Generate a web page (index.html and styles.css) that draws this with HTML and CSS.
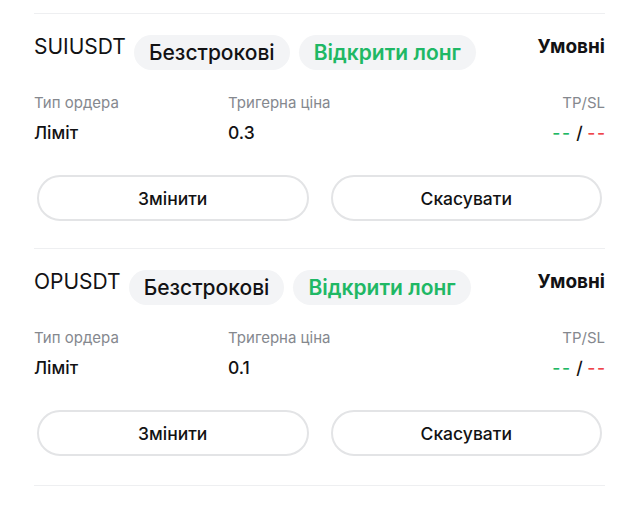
FILE: index.html
```html
<!DOCTYPE html>
<html lang="uk">
<head>
<meta charset="utf-8">
<link rel="stylesheet" href="styles.css">
</head>
<body>
<div class="list">
  <div class="card">
    <div class="head">
      <span class="sym">SUIUSDT</span>
      <span class="pill">Безстрокові</span>
      <span class="pill green">Відкрити лонг</span>
      <span class="type">Умовні</span>
    </div>
    <div class="info">
      <div class="cell"><div class="lbl">Тип ордера</div><div class="val">Ліміт</div></div>
      <div class="cell"><div class="lbl">Тригерна ціна</div><div class="val">0.3</div></div>
      <div class="cell right"><div class="lbl">TP/SL</div><div class="val"><span class="g">--</span> / <span class="r">--</span></div></div>
    </div>
    <div class="actions">
      <button class="btn">Змінити</button>
      <button class="btn">Скасувати</button>
    </div>
  </div>
  <div class="card">
    <div class="head">
      <span class="sym">OPUSDT</span>
      <span class="pill">Безстрокові</span>
      <span class="pill green">Відкрити лонг</span>
      <span class="type">Умовні</span>
    </div>
    <div class="info">
      <div class="cell"><div class="lbl">Тип ордера</div><div class="val">Ліміт</div></div>
      <div class="cell"><div class="lbl">Тригерна ціна</div><div class="val">0.1</div></div>
      <div class="cell right"><div class="lbl">TP/SL</div><div class="val"><span class="g">--</span> / <span class="r">--</span></div></div>
    </div>
    <div class="actions">
      <button class="btn">Змінити</button>
      <button class="btn">Скасувати</button>
    </div>
  </div>
</div>
</body>
</html>
```
FILE: styles.css
```css
html, body {
  margin: 0;
  padding: 0;
  background: #fff;
}
body {
  font-family: Inter, "Noto Sans", sans-serif;
  color: #121214;
}
.list {
  margin-left: 34px;
  width: 571px;
  padding-top: 13px;
}
.card {
  border-top: 1px solid #eeeff1;
  padding: 21px 0 27px;
}
.card:last-child {
  border-bottom: 1px solid #eeeff1;
  padding-bottom: 29px;
}
.head {
  display: flex;
  align-items: flex-start;
  height: 35px;
}
.sym {
  font-size: 21px;
  line-height: 22px;
  margin-top: 1px;
}
.pill {
  margin-left: 8px;
  height: 35px;
  line-height: 35px;
  padding: 0 15px;
  border-radius: 18px;
  background: #f3f4f6;
  font-size: 21px;
  font-weight: 500;
}
.pill.green {
  margin-left: 9px;
  color: #1fb865;
  font-weight: 600;
}
.type {
  margin-left: auto;
  font-size: 19px;
  font-weight: 700;
  line-height: 22px;
  margin-top: 1px;
}
.info {
  display: grid;
  grid-template-columns: 194px 1fr auto;
  margin-top: 25px;
}
.lbl {
  font-size: 15px;
  line-height: 16px;
  color: #85888e;
}
.val {
  font-size: 17.5px;
  line-height: 20px;
  margin-top: 12px;
  font-weight: 500;
  white-space: nowrap;
}
.right {
  text-align: right;
}
.g, .r {
  letter-spacing: 1.5px;
}
.g { color: #1fb865; }
.r { color: #ef454a; margin-right: -1.5px; }
.actions {
  display: flex;
  gap: 22px;
  padding: 0 3px;
  margin-top: 32px;
}
.btn {
  flex: 1;
  height: 46px;
  border: 2px solid #e3e4e6;
  border-radius: 23px;
  background: #fff;
  font-family: inherit;
  font-size: 17.5px;
  font-weight: 500;
  color: #121214;
}
```
